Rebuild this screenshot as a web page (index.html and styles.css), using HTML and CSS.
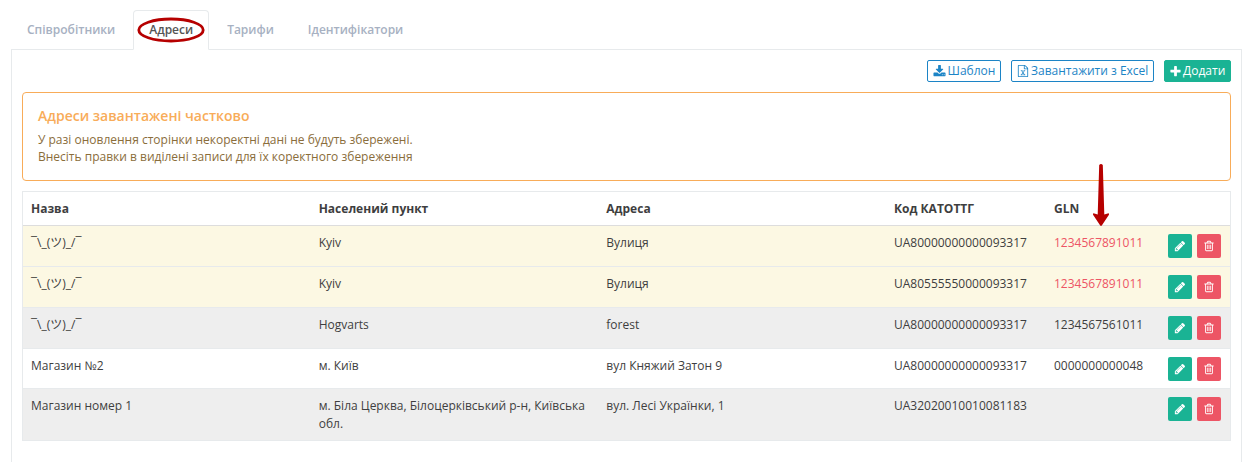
FILE: index.html
```html
<!DOCTYPE html>
<html lang="uk">
<head>
<meta charset="utf-8">
<title>Адреси</title>
<link rel="stylesheet" href="styles.css">
</head>
<body>
<svg class="sprite" aria-hidden="true">
  <symbol id="download" viewBox="0 0 1792 1792"><path d="M1344 1344q0-26-19-45t-45-19-45 19-19 45 19 45 45 19 45-19 19-45zm256 0q0-26-19-45t-45-19-45 19-19 45 19 45 45 19 45-19 19-45zm128-224v320q0 40-28 68t-68 28h-1472q-40 0-68-28t-28-68v-320q0-40 28-68t68-28h465l135 136q58 56 136 56t136-56l136-136h464q40 0 68 28t28 68zm-325-569q17 41-14 70l-448 448q-18 19-45 19t-45-19l-448-448q-31-29-14-70 17-39 59-39h256v-448q0-26 19-45t45-19h256q26 0 45 19t19 45v448h256q42 0 59 39z"/></symbol>
  <symbol id="excel" viewBox="0 0 1792 1792"><path d="M1596 380q28 28 48 76t20 88v1152q0 40-28 68t-68 28h-1344q-40 0-68-28t-28-68v-1600q0-40 28-68t68-28h896q40 0 88 20t76 48zm-444-244v376h376q-10-29-22-41l-313-313q-12-12-41-22zm384 1528v-1024h-416q-40 0-68-28t-28-68v-416h-768v1536h1280zm-979-234v106h281v-106h-75l103-161q5-7 10-16.500t7.500-13.500 3.500-4h2q1 4 5 10 2 4 4.500 7.500t6 8 6.500 8.500l107 161h-76v106h291v-106h-68l-192-273 195-282h67v-107h-279v107h74l-103 159q-4 7-10 16.500t-9 13.500l-2 3h-2q-1-4-5-10-6-11-17-23l-106-159h76v-107h-290v107h68l189 272-194 283h-68z"/></symbol>
  <symbol id="plus" viewBox="0 0 1792 1792"><path d="M1600 736v192q0 40-28 68t-68 28h-416v416q0 40-28 68t-68 28h-192q-40 0-68-28t-28-68v-416h-416q-40 0-68-28t-28-68v-192q0-40 28-68t68-28h416v-416q0-40 28-68t68-28h192q40 0 68 28t28 68v416h416q40 0 68 28t28 68z"/></symbol>
  <symbol id="pencil" viewBox="0 0 1792 1792"><path d="M491 1536l91-91-235-235-91 91v107h128v128h107zm523-928q0-22-22-22-10 0-17 7l-542 542q-7 7-7 17 0 22 22 22 10 0 17-7l542-542q7-7 7-17zm-54-192l416 416-832 832h-416v-416zm683 96q0 53-37 90l-166 166-416-416 166-165q36-38 90-38 53 0 91 38l235 234q37 39 37 91z"/></symbol>
  <symbol id="trash" viewBox="0 0 1792 1792"><path d="M704 736v576q0 14-9 23t-23 9h-64q-14 0-23-9t-9-23v-576q0-14 9-23t23-9h64q14 0 23 9t9 23zm256 0v576q0 14-9 23t-23 9h-64q-14 0-23-9t-9-23v-576q0-14 9-23t23-9h64q14 0 23 9t9 23zm256 0v576q0 14-9 23t-23 9h-64q-14 0-23-9t-9-23v-576q0-14 9-23t23-9h64q14 0 23 9t9 23zm128 724v-948h-896v948q0 22 7 40.500t14.500 27 10.500 8.500h832q3 0 10.500-8.500t14.500-27 7-40.500zm-672-1076h448l-48-117q-7-9-17-11h-317q-10 2-17 11zm928 32v64q0 14-9 23t-23 9h-96v948q0 83-47 143.500t-113 60.500h-832q-66 0-113-58.500t-47-141.500v-952h-96q-14 0-23-9t-9-23v-64q0-14 9-23t23-9h309l70-167q15-37 54-63t79-26h320q40 0 79 26t54 63l70 167h309q14 0 23 9t9 23z"/></symbol>
</svg>
<nav class="tabs">
  <a class="tab">Співробітники</a>
  <a class="tab active">Адреси<svg class="ring" viewBox="0 0 68 26"><ellipse cx="34" cy="13" rx="32.200" ry="11"/></svg></a>
  <a class="tab">Тарифи</a>
  <a class="tab">Ідентифікатори</a>
</nav>
<main class="panel">
  <div class="toolbar">
    <button class="btn outline template"><svg><use href="#download"/></svg><span>Шаблон</span></button>
    <button class="btn outline upload"><svg><use href="#excel"/></svg><span>Завантажити з Excel</span></button>
    <button class="btn primary add"><svg><use href="#plus"/></svg><span>Додати</span></button>
  </div>
  <section class="alert">
    <h4>Адреси завантажені частково</h4>
    <p>У разі оновлення сторінки некоректні дані не будуть збережені.<br>Внесіть правки в виділені записи для їх коректного збереження</p>
  </section>
  <div class="table">
    <div class="row head"><div>Назва</div><div>Населений пункт</div><div>Адреса</div><div>Код КАТОТТГ</div><div class="gln">GLN<svg class="arrow" viewBox="0 0 16 62"><path d="M6.200 1Q8 -.8 9.800 1L11.300 50.500L15.500 49.300Q16.400 50 15.800 51L8.800 61.500Q8 62.300 7.200 61.500L.2 51Q-.4 50 .5 49.300L4.700 50.500Z"/></svg></div><div></div></div>
    <div class="row warn"><div>¯\_(ツ)_/¯</div><div>Kyiv</div><div>Вулиця</div><div>UA80000000000093317</div><div class="bad">1234567891011</div><div class="actions"><button class="icon edit"><svg><use href="#pencil"/></svg></button><button class="icon delete"><svg><use href="#trash"/></svg></button></div></div>
    <div class="row warn"><div>¯\_(ツ)_/¯</div><div>Kyiv</div><div>Вулиця</div><div>UA80555550000093317</div><div class="bad">1234567891011</div><div class="actions"><button class="icon edit"><svg><use href="#pencil"/></svg></button><button class="icon delete"><svg><use href="#trash"/></svg></button></div></div>
    <div class="row odd"><div>¯\_(ツ)_/¯</div><div>Hogvarts</div><div>forest</div><div>UA80000000000093317</div><div>1234567561011</div><div class="actions"><button class="icon edit"><svg><use href="#pencil"/></svg></button><button class="icon delete"><svg><use href="#trash"/></svg></button></div></div>
    <div class="row short"><div>Магазин №2</div><div>м. Київ</div><div>вул Княжий Затон 9</div><div>UA80000000000093317</div><div>0000000000048</div><div class="actions"><button class="icon edit"><svg><use href="#pencil"/></svg></button><button class="icon delete"><svg><use href="#trash"/></svg></button></div></div>
    <div class="row odd last"><div>Магазин номер 1</div><div>м. Біла Церква, Білоцерківський р-н, Київська обл.</div><div>вул. Лесі Українки, 1</div><div>UA32020010010081183</div><div></div><div class="actions"><button class="icon edit"><svg><use href="#pencil"/></svg></button><button class="icon delete"><svg><use href="#trash"/></svg></button></div></div>
  </div>
</main>
</body>
</html>
```
FILE: styles.css
```css
* { box-sizing: border-box; }
html, body { height: 100%; }
body {
  margin: 0;
  padding: 10px 10px 0 11px;
  display: flex;
  flex-direction: column;
  overflow: hidden;
  background: #fff;
  color: #3e3e40;
  font: 12px/18px "Open Sans", "Noto Sans CJK JP", sans-serif;
}
.sprite { display: none; }
svg { fill: currentColor; }
.tabs { display: flex; height: 40px; flex: none; position: relative; z-index: 1; }
.tab {
  height: 40px;
  padding: 10px 15px 0;
  border: 1px solid transparent;
  color: #a7b1c2;
  font-weight: 600;
  margin-right: 2px;
  white-space: nowrap;
}
.tab.active {
  position: relative;
  background: #fff;
  border-color: #e7eaec;
  border-bottom-color: #fff;
  border-radius: 4px 4px 0 0;
  color: #555;
}
.ring { position: absolute; left: 3px; top: 6px; width: 68px; height: 26px; fill: none; stroke: #b60000; stroke-width: 2.8; }
.panel { flex: 1; margin-top: -1px; border: 1px solid #e7eaec; border-bottom: 0; padding: 10px; }
.toolbar { display: flex; justify-content: flex-end; gap: 10px; height: 22px; }
.btn {
  display: flex;
  align-items: center;
  gap: 2px;
  height: 22px;
  padding: 0 5px;
  border: 1px solid;
  border-radius: 2px;
  background: #fff;
  font: inherit;
  white-space: nowrap;
}
.btn svg { width: 12px; height: 12px; flex: none; }
.template { width: 74px; gap: 1.5px; }
.upload { width: 143px; }
.add { width: 67px; gap: 1px; }
.template svg { width: 13px; height: 13px; }
.add svg { width: 13px; height: 13px; margin: 0 -1px 0 -1px; }
.add span { margin-left: 1px; }
.outline { color: #1c84c6; }
.primary { background: #1ab394; border-color: #1ab394; color: #fff; }
.alert { height: 89px; margin-top: 10px; padding: 14px 15px; border: 1px solid #f8ac59; border-radius: 4px; color: #8a6d3b; }
.alert h4 { margin: 0 0 6px; color: #f8ac59; font-size: 14px; line-height: 18px; font-weight: 600; }
.alert p { margin: 0; line-height: 17px; }
.table { margin-top: 10px; border: 1px solid #e7eaec; border-bottom: 0; }
.row {
  display: grid;
  grid-template-columns: 287.7px 287.6px 287.7px 160px 114px 70px;
  height: 41px;
  border-bottom: 1px solid #e7eaec;
}
.row > div { padding: 8px 8px 0; }
.head { height: 34px; font-weight: 700; border-bottom-color: #ddd; }
.warn { background: #fcf8e3; }
.odd { background: #eee; }
.short { height: 40px; }
.last { height: 52px; }
.bad { color: #ed5565; }
.gln { position: relative; }
.arrow { position: absolute; left: 47px; top: -28px; width: 16px; height: 62px; fill: #b60000; }
.row > .actions { display: flex; gap: 5px; padding: 8px 0 0 8px; }
.icon { display: grid; place-items: center; width: 24px; height: 24px; padding: 0; border: 0; border-radius: 2px; color: #fff; }
.icon svg { width: 12px; height: 12px; }
.edit { background: #1ab394; }
.delete { background: #ed5565; }
```
